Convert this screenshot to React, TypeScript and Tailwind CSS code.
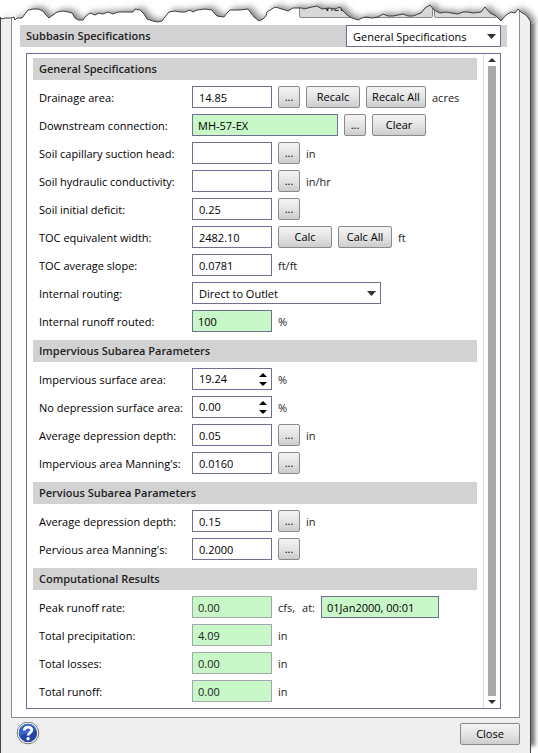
import { useId } from "react";
import type { ReactNode } from "react";
import clsx from "clsx";

const buttonStyle =
  "h-[22px] shrink-0 rounded-[2px] border border-[#8a8a8a] bg-linear-to-b from-[#f4f4f4] via-[#e4e4e4] to-[#cdcdcd] text-center leading-5";

const tearLine =
  "M0 17L2 19L5 18L11 18L14 17L15 20L17 18L22 18L25 14L28 10L33 9L38 9L43 11L46 15L49 18L53 15L57 12L63 11L68 12L72 13L75 18L78 20L83 20L86 16L90 13L95 15L99 13L103 14L108 12L113 14L118 12L126 12L133 12L135 9L140 10L144 14L147 19L153 21L158 22L162 21L165 17L169 12L175 11L180 12L185 12L190 10L193 12L197 10L205 9L212 10L215 14L217 16L224 17L227 13L230 10L240 10L248 9L251 13L254 17L259 21L263 19L266 16L267 12L275 7L282 9L288 11L293 8L302 8L304 9L312 7L317 6L322 9L329 8L335 9L340 7L343 11L347 15L352 18L358 20L362 18L366 17L372 18L378 17L383 14L388 16L393 16L398 15L403 14L408 16L413 16L418 14L421 13L425 8L430 5L434 10L440 13L446 12L451 13L458 14L463 12L468 12L473 13L481 12L485 7L490 13L496 16L501 21L506 15L511 12L515 13L518 9L521 12L526 15L529 19L531 22";

function TornEdge() {
  return (
    <svg
      className="pointer-events-none absolute inset-x-0 top-0 h-6 w-full"
      viewBox="0 0 538 24"
      preserveAspectRatio="none"
      aria-hidden="true"
    >
      <defs>
        <clipPath id="tear-clip">
          <path d={tearLine + "L531 24L538 24L538 0L0 0Z"} />
        </clipPath>
        <filter id="tear-blur" x="-5%" y="-50%" width="110%" height="200%">
          <feGaussianBlur stdDeviation="3" />
        </filter>
      </defs>
      <g clipPath="url(#tear-clip)">
        <rect width="538" height="24" fill="#fff" />
        <path
          d={tearLine + "L531 60L14 60L14 18Z"}
          transform="translate(4 -2)"
          fill="#888"
          filter="url(#tear-blur)"
        />
      </g>
      <path d={tearLine} fill="none" stroke="#3f3f3f" />
    </svg>
  );
}

function Row({ label, children }: { label: string; children: (id: string) => ReactNode }) {
  const id = useId();
  return (
    <div className="flex h-[22px] items-center gap-1.5 pl-1.5">
      <label htmlFor={id} className="w-[147px] shrink-0 whitespace-nowrap pt-0.5">
        {label}
      </label>
      {children(id)}
    </div>
  );
}

interface FieldProps {
  id?: string;
  label?: string;
  value?: string;
  width?: string;
  green?: boolean;
  soft?: boolean;
}

function Field({ id, label, value = "", width = "w-20", green, soft }: FieldProps) {
  return (
    <input
      id={id}
      aria-label={label}
      type="text"
      defaultValue={value}
      readOnly={green}
      className={clsx(
        "h-[22px] shrink-0 border outline-none",
        width,
        green ? "bg-[#c8f7c8] pl-[5px]" : "bg-white pl-1.5",
        soft ? "border-[#a5a5ad] text-[#222]" : "border-[#706f91]"
      )}
    />
  );
}

function Spinner({ id, value }: { id: string; value: string }) {
  return (
    <div className="flex h-[22px] w-20 shrink-0 border border-[#706f91] bg-white">
      <input id={id} type="text" defaultValue={value} className="min-w-0 flex-1 pl-1.5 outline-none" />
      <div className="flex w-3 flex-col items-center justify-center gap-[5px] pr-1">
        <button type="button" aria-label="Increase">
          <svg width="8" height="4" viewBox="0 0 8 4" className="block">
            <path d="M4 0L8 4H0Z" />
          </svg>
        </button>
        <button type="button" aria-label="Decrease">
          <svg width="8" height="4" viewBox="0 0 8 4" className="block">
            <path d="M0 0H8L4 4Z" />
          </svg>
        </button>
      </div>
    </div>
  );
}

function Dropdown({ id, label, value, width }: { id?: string; label?: string; value: string; width: string }) {
  return (
    <div className={clsx("relative h-[22px] shrink-0", width)}>
      <select
        id={id}
        aria-label={label}
        className="block h-full w-full appearance-none border border-[#706f91] bg-white pl-1.5 pt-px outline-none"
      >
        <option>{value}</option>
      </select>
      <svg width="9" height="5" viewBox="0 0 9 5" className="pointer-events-none absolute right-[5px] top-[9px]">
        <path d="M0 0H9L4.5 5Z" fill="#333" />
      </svg>
    </div>
  );
}

function Button({ children, width = "w-[54px]" }: { children: ReactNode; width?: string }) {
  return (
    <button type="button" className={clsx(buttonStyle, width)}>
      {children}
    </button>
  );
}

function More() {
  return (
    <button type="button" aria-label="More" className={clsx(buttonStyle, "w-[22px]")}>
      ...
    </button>
  );
}

function Unit({ children }: { children: ReactNode }) {
  return <span className="whitespace-nowrap pt-px text-[#222]">{children}</span>;
}

function Section({ title, children }: { title: string; children: ReactNode }) {
  return (
    <section className="flex flex-col gap-1.5">
      <h2 className="h-[22px] bg-[#d2d2d2] pl-1.5 font-semibold leading-[22px] text-[#222]">{title}</h2>
      {children}
    </section>
  );
}

export default function App() {
  return (
    <div className="relative overflow-hidden bg-white font-['Open_Sans','Noto_Sans',sans-serif] text-[11px] leading-4 text-black">
      <div className="mr-[7px] border border-t-0 border-[#444] bg-[#efefef] px-2.5 shadow-[4px_-8px_4px_#777]">
        <div className="border border-t-0 border-[#8c8c8c] bg-white pb-2">
          {/* toolbar, mostly torn away */}
          <div className="flex h-[25px] items-start justify-end gap-px pr-[22px]">
            <button type="button" className="h-[18px] w-[134px] rounded-b-[2px] border border-[#8a8a8a] bg-[#d8d8d8] pb-2 pl-6 text-left leading-3">
              View
            </button>
            <button type="button" aria-label="Options" className="h-[18px] w-[63px] rounded-b-[2px] border border-[#8a8a8a] bg-[#d8d8d8]" />
          </div>

          <header className="ml-2 mr-3 flex h-[22px] items-center justify-between bg-[#d2d2d2] pl-1.5 pr-1.5">
            <h1 className="font-semibold text-[#222]">Subbasin Specifications</h1>
            <Dropdown label="Specification group" value="General Specifications" width="w-[155px]" />
          </header>

          <div className="ml-3.5 mr-[18px] mt-1.5 flex border border-[#706f91]">
            <div className="flex min-w-0 flex-1 flex-col gap-2 px-1.5 pb-1.5 pt-1">
              <Section title="General Specifications">
                <Row label="Drainage area:">
                  {(id) => (
                    <>
                      <Field id={id} value="14.85" />
                      <More />
                      <Button>Recalc</Button>
                      <Button width="w-[60px]">Recalc All</Button>
                      <Unit>acres</Unit>
                    </>
                  )}
                </Row>
                <Row label="Downstream connection:">
                  {(id) => (
                    <>
                      <Field id={id} value="MH-57-EX" width="w-[146px]" green />
                      <More />
                      <Button>Clear</Button>
                    </>
                  )}
                </Row>
                <Row label="Soil capillary suction head:">
                  {(id) => (
                    <>
                      <Field id={id} />
                      <More />
                      <Unit>in</Unit>
                    </>
                  )}
                </Row>
                <Row label="Soil hydraulic conductivity:">
                  {(id) => (
                    <>
                      <Field id={id} />
                      <More />
                      <Unit>in/hr</Unit>
                    </>
                  )}
                </Row>
                <Row label="Soil initial deficit:">
                  {(id) => (
                    <>
                      <Field id={id} value="0.25" />
                      <More />
                    </>
                  )}
                </Row>
                <Row label="TOC equivalent width:">
                  {(id) => (
                    <>
                      <Field id={id} value="2482.10" />
                      <Button>Calc</Button>
                      <Button>Calc All</Button>
                      <Unit>ft</Unit>
                    </>
                  )}
                </Row>
                <Row label="TOC average slope:">
                  {(id) => (
                    <>
                      <Field id={id} value="0.0781" />
                      <Unit>ft/ft</Unit>
                    </>
                  )}
                </Row>
                <Row label="Internal routing:">
                  {(id) => <Dropdown id={id} value="Direct to Outlet" width="w-[189px]" />}
                </Row>
                <Row label="Internal runoff routed:">
                  {(id) => (
                    <>
                      <Field id={id} value="100" green />
                      <Unit>%</Unit>
                    </>
                  )}
                </Row>
              </Section>

              <Section title="Impervious Subarea Parameters">
                <Row label="Impervious surface area:">
                  {(id) => (
                    <>
                      <Spinner id={id} value="19.24" />
                      <Unit>%</Unit>
                    </>
                  )}
                </Row>
                <Row label="No depression surface area:">
                  {(id) => (
                    <>
                      <Spinner id={id} value="0.00" />
                      <Unit>%</Unit>
                    </>
                  )}
                </Row>
                <Row label="Average depression depth:">
                  {(id) => (
                    <>
                      <Field id={id} value="0.05" />
                      <More />
                      <Unit>in</Unit>
                    </>
                  )}
                </Row>
                <Row label="Impervious area Manning's:">
                  {(id) => (
                    <>
                      <Field id={id} value="0.0160" />
                      <More />
                    </>
                  )}
                </Row>
              </Section>

              <Section title="Pervious Subarea Parameters">
                <Row label="Average depression depth:">
                  {(id) => (
                    <>
                      <Field id={id} value="0.15" />
                      <More />
                      <Unit>in</Unit>
                    </>
                  )}
                </Row>
                <Row label="Pervious area Manning's:">
                  {(id) => (
                    <>
                      <Field id={id} value="0.2000" />
                      <More />
                    </>
                  )}
                </Row>
              </Section>

              <Section title="Computational Results">
                <Row label="Peak runoff rate:">
                  {(id) => (
                    <>
                      <Field id={id} value="0.00" green soft />
                      <span className="flex w-[37px] shrink-0 justify-between">
                        <Unit>cfs,</Unit>
                        <Unit>at:</Unit>
                      </span>
                      <Field label="Peak runoff time" value="01Jan2000, 00:01" width="w-[118px]" green />
                    </>
                  )}
                </Row>
                {[
                  ["Total precipitation:", "4.09"],
                  ["Total losses:", "0.00"],
                  ["Total runoff:", "0.00"],
                ].map(([label, value]) => (
                  <Row key={label} label={label}>
                    {(id) => (
                      <>
                        <Field id={id} value={value} green soft />
                        <Unit>in</Unit>
                      </>
                    )}
                  </Row>
                ))}
              </Section>
            </div>

            {/* scrollbar */}
            <div className="flex w-[17px] shrink-0 flex-col items-center gap-1 border-l border-[#dcdcdc] py-1">
              <svg width="8" height="4" viewBox="0 0 8 4" className="shrink-0">
                <path d="M4 0L8 4H0Z" fill="#333" />
              </svg>
              <div className="w-2 flex-1 bg-[#a9a9a9]" />
              <svg width="8" height="4" viewBox="0 0 8 4" className="shrink-0">
                <path d="M0 0H8L4 4Z" fill="#333" />
              </svg>
            </div>
          </div>
        </div>

        <footer className="flex items-center justify-between pb-[7px] pl-[5px] pt-1">
          <button type="button" aria-label="Help">
            <svg width="24" height="24" viewBox="0 0 24 24" className="block">
              <circle cx="12" cy="11" r="10.8" fill="#fff" stroke="#777" />
              <circle cx="12" cy="11" r="9.2" fill="#2447a8" />
              <path d="M3.5 14.5A9.2 9.2 0 0 1 15 2.3A9.2 9.2 0 0 1 20.5 8Q13 9 3.5 14.5Z" fill="#3c62cc" />
              <path d="M8.3 8.6C8.3 4 15.8 4.1 15.8 8.1C15.8 10.8 12.1 10.6 12.1 13.6" fill="none" stroke="#fff" strokeWidth="2.8" />
              <circle cx="12.1" cy="16.8" r="1.7" fill="#fff" />
            </svg>
          </button>
          <Button width="w-[60px]">Close</Button>
        </footer>
      </div>
      <TornEdge />
    </div>
  );
}
